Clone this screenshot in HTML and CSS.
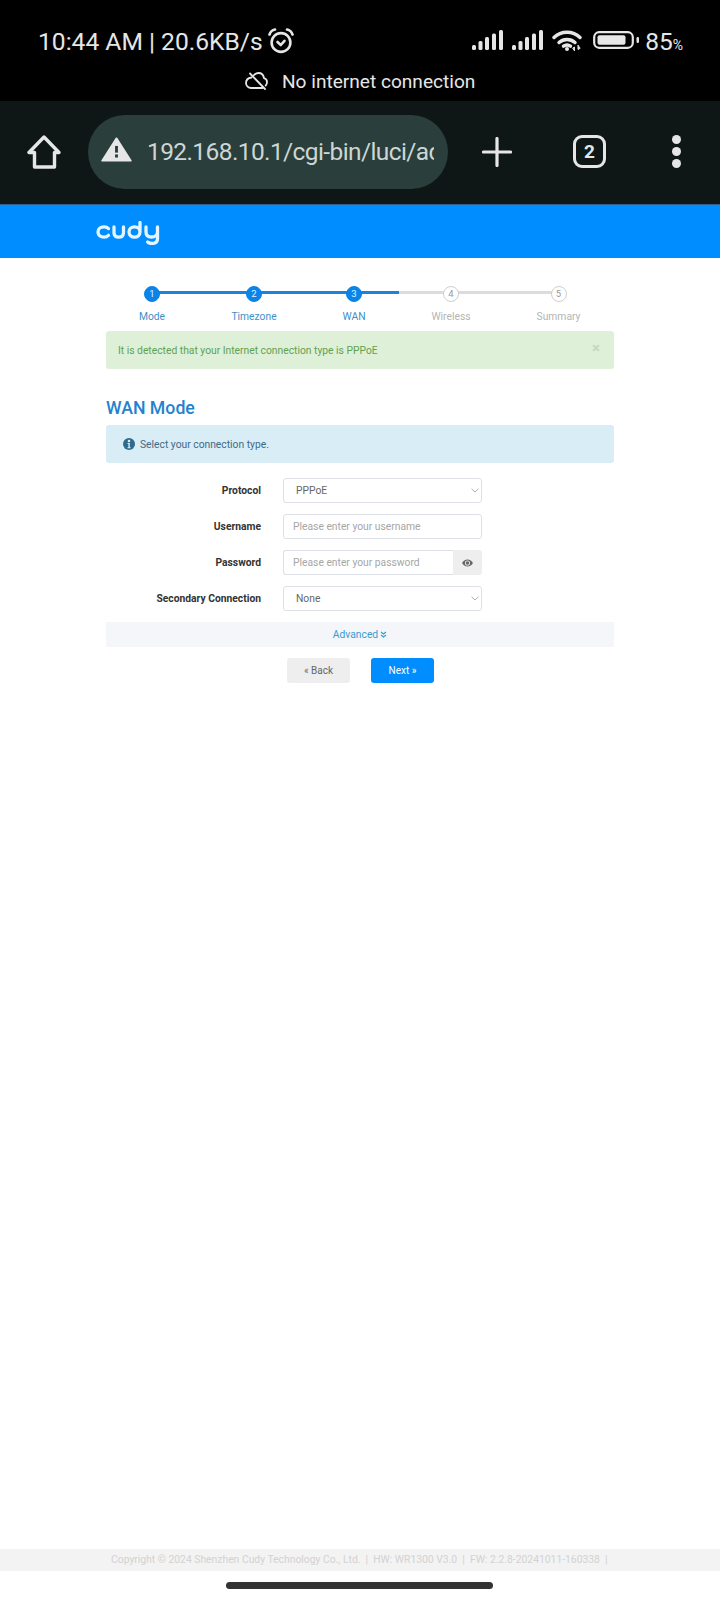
FILE: index.html
```html
<!DOCTYPE html>
<html lang="en">
<head>
<meta charset="utf-8">
<title>Cudy WAN Mode</title>
<link rel="stylesheet" href="styles.css">
</head>
<body>
<div class="phone">
  <header class="system">
    <div class="status">
      <div class="status-left">
        <span class="clock">10:44 AM | 20.6KB/s</span>
        <svg class="alarm" viewBox="0 0 26 26" fill="none" stroke="#e6e6e6" stroke-width="2.6" stroke-linecap="round" stroke-linejoin="round"><circle cx="13" cy="14.5" r="9.4"/><path d="M9.500 14l3.300 3 3.700-4.200"/><path d="M1.500 6.500C2.500 3.500 4.500 2 7 1.500M24.500 6.500C23.500 3.500 21.500 2 19 1.500"/></svg>
      </div>
      <div class="status-right">
        <svg class="signal" viewBox="0 0 31 20" fill="#e6e6e6"><rect x="0" y="15" width="4" height="5" rx="1.500"/><rect x="6.500" y="11" width="4" height="9" rx="1.500"/><rect x="13" y="7" width="4" height="13" rx="1.500"/><rect x="20" y="3.500" width="4" height="16.500" rx="1.500"/><rect x="27" y="0" width="4" height="20" rx="1.500"/></svg>
        <svg class="signal" viewBox="0 0 31 20" fill="#e6e6e6"><rect x="0" y="15" width="4" height="5" rx="1.500"/><rect x="6.500" y="11" width="4" height="9" rx="1.500"/><rect x="13" y="7" width="4" height="13" rx="1.500"/><rect x="20" y="3.500" width="4" height="16.500" rx="1.500"/><rect x="27" y="0" width="4" height="20" rx="1.500"/></svg>
        <svg class="wifi" viewBox="0 0 31 21" fill="none" stroke="#e6e6e6" stroke-width="3.400" stroke-linecap="round"><path d="M2 7.500C9 .5 21 .5 28 7.500"/><path d="M7 12.500C11.500 8.500 18.500 8.500 23 12.500"/><path d="M11.500 16.200C13.500 14.800 16.500 14.800 18.500 16.200"/><circle cx="15" cy="19" r="2" fill="#e6e6e6" stroke="none"/><path d="M22.500 20.500v-3.500l-1.500 1zM26 15.500v4l1.800-1z" fill="#e6e6e6" stroke="#e6e6e6" stroke-width="1"/></svg>
        <svg class="battery" viewBox="0 0 46 18" fill="none"><rect x="1.200" y="1.200" width="38.600" height="15.600" rx="5" stroke="#e6e6e6" stroke-width="2.200"/><rect x="4.500" y="4.300" width="28" height="9.400" rx="2" fill="#e6e6e6"/><rect x="43.500" y="6" width="2.500" height="6" rx="1.200" fill="#e6e6e6"/></svg>
        <span class="level">85<small>%</small></span>
      </div>
    </div>
    <div class="offline">
      <svg class="cloud" viewBox="0 0 23 18" fill="none" stroke="#e6e6e6" stroke-width="1.800" stroke-linecap="round" stroke-linejoin="round"><path d="M6.500 5.500C3.500 6 1 8 1 11c0 3 2.500 5 5 5h11.500"/><path d="M8.500 3.500C10 1.800 12 1 13.500 1c3 0 5 2 5.500 5.200 2 .5 3 2.300 3 4 0 1.300-.5 2.500-1.300 3.300"/><path d="M5 1.500l15 15.500"/></svg>
      <span>No internet connection</span>
    </div>
  </header>

  <nav class="toolbar">
    <svg class="home" viewBox="0 0 34 34" fill="none" stroke="#e6e6e6" stroke-width="3.400" stroke-linejoin="round"><path d="M17 2L2 17.500h5.500V32h20V17.500H32z"/></svg>
    <div class="omnibox">
      <svg class="warn" viewBox="0 0 34 28"><path d="M17 1.500L33 26.500H1z" fill="#e6e6e6" stroke="#e6e6e6" stroke-width="2" stroke-linejoin="round"/><rect x="15.400" y="10" width="3.200" height="7.500" fill="#2a3e3b"/><rect x="15.400" y="19.500" width="3.200" height="3.500" fill="#2a3e3b"/></svg>
      <div class="url">192.168.10.1/cgi-bin/luci/admin</div>
    </div>
    <svg class="plus" viewBox="0 0 30 30" stroke="#e6e6e6" stroke-width="3.200" stroke-linecap="round"><path d="M15 1.500v27M1.500 15h27"/></svg>
    <div class="tabs">2</div>
    <div class="menu"><i></i><i></i><i></i></div>
  </nav>

  <div class="brand">
    <svg class="logo" viewBox="0 0 64 24" fill="none" stroke="#e3f5ff" stroke-width="3.300" stroke-linecap="round" stroke-linejoin="round" role="img" aria-label="cudy"><path d="M12.500 7.600C11.300 6.400 9.800 5.900 8 5.900 4.500 5.900 2 8 2 11s2.500 5.100 6 5.100c1.800 0 3.300-.6 4.500-1.800"/><path d="M18 6v5.500c0 3 1.900 4.700 4.800 4.700s4.700-1.700 4.700-4.700V6"/><path d="M44 1.500V11c0 3-2.400 5.100-5.500 5.100S33 14 33 11s2.400-5.100 5.500-5.100S44 8 44 11"/><path d="M50 6v5c0 3 2 5 5.500 5 3 0 6-2 6-5V6v11.500c0 3.500-2.500 5-5.500 5-1.800 0-3.200-.5-4.300-1.500"/></svg>
  </div>

  <main class="page">
    <div class="stepper">
      <div class="track"><div class="track-done"></div></div>
      <div class="step done"><span class="dot">1</span><span class="label">Mode</span></div>
      <div class="step done"><span class="dot">2</span><span class="label">Timezone</span></div>
      <div class="step done"><span class="dot">3</span><span class="label">WAN</span></div>
      <div class="step"><span class="dot">4</span><span class="label">Wireless</span></div>
      <div class="step"><span class="dot">5</span><span class="label">Summary</span></div>
    </div>

    <div class="alert success">
      <span>It is detected that your Internet connection type is PPPoE</span>
      <span class="close">×</span>
    </div>

    <h1 class="title">WAN Mode</h1>

    <div class="alert info">
      <svg class="info-icon" viewBox="0 0 12 12"><circle cx="6" cy="6" r="6" fill="#2f6b8e"/><circle cx="6" cy="3" r="1.300" fill="#d9edf7"/><path d="M4.500 5h2.300v4.200h.8v1H4.500v-1h.9V6h-.9z" fill="#d9edf7"/></svg>
      <span>Select your connection type.</span>
    </div>

    <form class="form">
      <div class="row">
        <label class="row-label">Protocol</label>
        <select class="field select"><option>PPPoE</option></select>
      </div>
      <div class="row">
        <label class="row-label">Username</label>
        <input class="field input" type="text" placeholder="Please enter your username">
      </div>
      <div class="row">
        <label class="row-label">Password</label>
        <div class="group">
          <input class="field input joined" type="text" placeholder="Please enter your password">
          <span class="addon">
            <svg class="eye" viewBox="0 0 16 11"><path d="M8 .5C4.500.5 1.700 2.500.2 5.500 1.700 8.500 4.500 10.500 8 10.500s6.300-2 7.800-5C14.300 2.500 11.500.5 8 .5z" fill="#666"/><circle cx="8" cy="5.500" r="3.700" fill="#eee"/><circle cx="8" cy="5.500" r="2.500" fill="#666"/></svg>
          </span>
        </div>
      </div>
      <div class="row">
        <label class="row-label">Secondary Connection</label>
        <select class="field select"><option>None</option></select>
      </div>
    </form>

    <div class="advanced">Advanced <svg class="chev" viewBox="0 0 7 7" fill="none" stroke="#3a9bd0" stroke-width="1.200"><path d="M1 1l2.500 2L6 1M1 4l2.500 2L6 4"/></svg></div>

    <div class="actions">
      <button class="btn back" type="button">« Back</button>
      <button class="btn next" type="button">Next »</button>
    </div>
  </main>

  <footer class="footer">Copyright © 2024 Shenzhen Cudy Technology Co., Ltd. &nbsp;|&nbsp; HW: WR1300 V3.0 &nbsp;|&nbsp; FW: 2.2.8-20241011-160338 &nbsp;|</footer>
  <div class="gesture"><div class="pill"></div></div>
</div>
</body>
</html>
```

FILE: styles.css
```css
* { box-sizing: border-box; }
html, body { margin: 0; padding: 0; background: #fff; }
body { font-family: Roboto, "Liberation Sans", sans-serif; }

.phone { width: 720px; height: 1600px; display: flex; flex-direction: column; overflow: hidden; }

/* system bars */
.system { height: 101px; background: #000; color: #e6e6e6; flex: none; display: flex; flex-direction: column; }
.status { height: 69px; padding: 28px 37px 0 38px; display: flex; justify-content: space-between; align-items: flex-start; }
.status-left { display: flex; align-items: flex-start; gap: 5px; }
.clock { font-size: 24.600px; line-height: 26px; margin-top: 1px; white-space: nowrap; }
.alarm { width: 26px; height: 26px; display: block; }
.status-right { display: flex; align-items: flex-start; }
.signal { width: 31px; height: 20px; margin: 2px 9px 0 0; display: block; }
.wifi { width: 31px; height: 21px; margin: 2px 10px 0 0; display: block; }
.battery { width: 46px; height: 18px; margin: 3px 6px 0 0; display: block; }
.level { font-size: 24.500px; line-height: 24px; margin-top: 2px; white-space: nowrap; }
.level small { font-size: 14px; }

.offline { display: flex; align-items: center; padding-left: 245px; gap: 14px; height: 24px; font-size: 19.100px; }
.cloud { width: 23px; height: 18px; display: block; }

/* browser toolbar */
.toolbar { height: 104px; background: #0e1716; flex: none; display: flex; align-items: center; border-bottom: 1px solid #2f5f8a; padding: 0 0 2px 27px; }
.home { width: 34px; height: 34px; display: block; margin-right: 27px; }
.omnibox { width: 360px; height: 74px; border-radius: 37px; background: #2a3e3b; display: flex; align-items: center; padding-left: 13px; margin-right: 34px; overflow: hidden; }
.warn { width: 31px; height: 25px; flex: none; margin: 0 15px 5px 0; display: block; }
.url { width: 287px; overflow: hidden; white-space: nowrap; font-size: 24.500px; letter-spacing: -.6px; color: #cdd6d4; }
.plus { width: 30px; height: 30px; display: block; margin-right: 61px; }
.tabs { width: 33px; height: 33px; border: 3px solid #e6e6e6; border-radius: 9px; color: #e6e6e6; font-size: 19px; font-weight: 700; display: flex; align-items: center; justify-content: center; margin-right: 66px; }
.menu { width: 9px; display: flex; flex-direction: column; gap: 3px; }
.menu i { display: block; width: 9px; height: 9px; border-radius: 50%; background: #e6e6e6; }

/* brand */
.brand { height: 53px; background: #008dff; flex: none; padding: 16px 0 0 96px; }
.logo { width: 64px; height: 24px; display: block; }

/* page */
.page { flex: 1; padding: 28px 106px 0 106px; }

.stepper { position: relative; display: grid; grid-template-columns: 100px 104px 96px 98px 117px; margin: 0 0 0 -4px; height: 40px; }
.track { position: absolute; left: 50px; top: 5px; width: 406px; height: 3px; background: #dcdcdc; }
.track-done { width: 247px; height: 3px; background: #1a84dc; }
.step { position: relative; display: flex; flex-direction: column; align-items: center; font-size: 10.300px; color: #b5b5b5; }
.dot { width: 16px; height: 16px; border-radius: 50%; background: #fff; border: 1px solid #cfcfcf; font-size: 9.500px; line-height: 14px; text-align: center; color: #999; }
.label { margin-top: 8px; line-height: 13px; }
.done { color: #3f8fc9; }
.done .dot { background: #0a84e8; border-color: #0a84e8; color: #e0f1ff; }

.alert { height: 38px; border-radius: 3px; display: flex; align-items: center; font-size: 10.300px; }
.success { margin-top: 5px; padding: 0 12px; background: #dff0d8; color: #5ea152; justify-content: space-between; }
.close { font-size: 15px; color: #c6d8bf; margin-right: 2px; font-weight: 700; line-height: 1; margin-top: -3px; }
.title { margin: 28px 0 6px; font-size: 17.700px; line-height: 22px; font-weight: 500; color: #1f83cf; }
.info { background: #d9edf7; color: #3e6b85; padding-left: 17px; gap: 5px; }
.info-icon { width: 12px; height: 12px; flex: none; display: block; }

.form { padding-top: 15px; display: flex; flex-direction: column; gap: 11px; }
.row { display: flex; align-items: center; height: 25px; }
.row-label { width: 155px; text-align: right; font-size: 10.300px; font-weight: 700; color: #333; margin-right: 22px; }
.field { width: 199px; height: 25px; border: 1px solid #dcdfe6; border-radius: 3px; background-color: #fff; font-family: inherit; font-size: 10.300px; }
.select { appearance: none; -webkit-appearance: none; padding: 0 12px; color: #666; background-image: url("data:image/svg+xml,%3Csvg xmlns='http://www.w3.org/2000/svg' width='8' height='5' viewBox='0 0 8 5'%3E%3Cpath d='M.6.8L4 4l3.400-3.200' fill='none' stroke='%23999' stroke-width='.8'/%3E%3C/svg%3E"); background-repeat: no-repeat; background-position: right 2px center; }
.input { padding: 0 9px; outline: none; }
.input::placeholder { color: #a6a6a6; opacity: 1; }
.group { display: flex; width: 199px; height: 25px; }
.joined { width: 170px; border-right: 0; border-radius: 3px 0 0 3px; }
.addon { width: 29px; height: 25px; background: #eeeeee; border-radius: 0 3px 3px 0; display: flex; align-items: center; justify-content: center; }
.eye { width: 11px; height: 8px; display: block; }

.advanced { margin-top: 11px; height: 25px; background: #f4f6f9; display: flex; align-items: center; justify-content: center; gap: 2px; font-size: 10.300px; color: #3a9bd0; }
.chev { width: 7px; height: 7px; display: block; }

.actions { margin-top: 11px; display: flex; padding-left: 181px; gap: 21px; }
.btn { width: 63px; height: 25px; border: 0; border-radius: 3px; font-family: inherit; font-size: 10px; padding: 0; }
.back { background: #eeeeee; color: #666; }
.next { background: #008dff; color: #fff; }

/* footer */
.footer { height: 22px; flex: none; background: #f3f3f3; color: #d2d2d2; font-size: 10.350px; line-height: 22px; padding-left: 111px; white-space: nowrap; }
.gesture { height: 29px; flex: none; padding: 11px 0 0 226px; background: #fff; }
.pill { width: 267px; height: 7px; border-radius: 4px; background: #333; }
```
